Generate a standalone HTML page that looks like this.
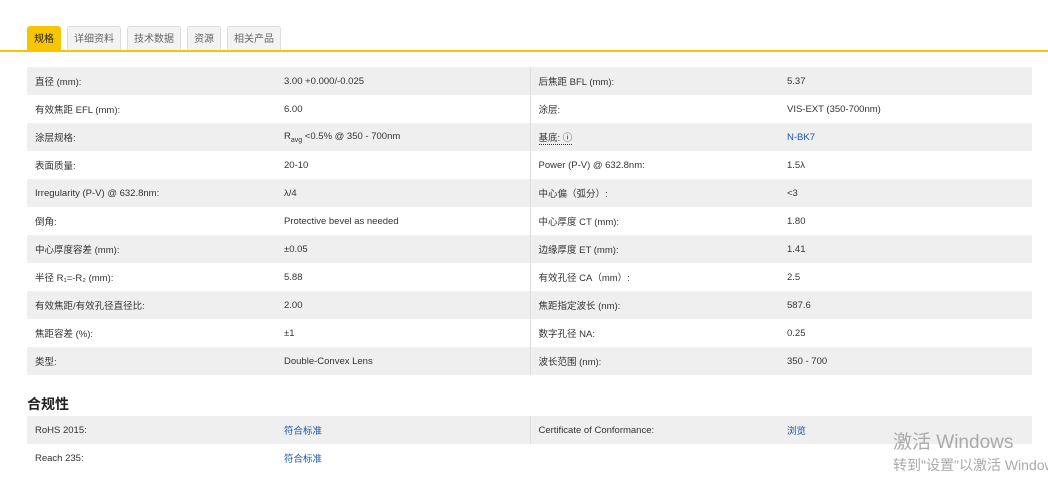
<!DOCTYPE html>
<html><head><meta charset="utf-8"><style>
body{margin:0;width:1048px;height:500px;background:#fff;font-family:"Liberation Sans","Noto Sans CJK SC",sans-serif;color:#333;overflow:hidden;position:relative}
.tabs{position:absolute;left:27px;top:26px;height:24px;display:flex;gap:6px}
.tab{height:23px;line-height:25px;padding:0 6px;font-size:10px;color:#666;background:#f3f3f3;border:1px solid #ddd;border-bottom:none;border-radius:3px 3px 0 0}
.tab.a{background:#f7c600;color:#222;border-color:#f7c600}
.line{position:absolute;left:0;top:50px;width:1048px;height:2px;background:#f7c600}
table{position:absolute;left:27px;border-collapse:collapse;width:1005px;font-size:9.5px;table-layout:fixed}
td{height:28px;padding:0 0 0 8px;vertical-align:middle;box-sizing:border-box}
tr:nth-child(odd) td{background:#efefef}
td.c1{width:249px}td.c2{width:254px;border-right:1px solid #ddd}td.c3{width:249px}
a{color:#1a56a6;text-decoration:none}
h3{position:absolute;left:27px;top:394px;margin:0;font-size:14px;font-weight:bold;color:#222}
.wm{position:absolute;left:893px;top:427px;color:#aaa;font-size:19px}
.wm2{position:absolute;left:893px;top:455px;color:#aaa;font-size:14px;white-space:nowrap}
</style></head><body>
<div class="tabs"><div class="tab a">规格</div><div class="tab">详细资料</div><div class="tab">技术数据</div><div class="tab">资源</div><div class="tab">相关产品</div></div>
<div class="line"></div>
<table style="top:67px">
<tr><td class="c1">直径 (mm):</td><td class="c2">3.00 +0.000/-0.025</td><td class="c3">后焦距 BFL (mm):</td><td>5.37</td></tr>
<tr><td class="c1">有效焦距 EFL (mm):</td><td class="c2">6.00</td><td class="c3">涂层:</td><td>VIS-EXT (350-700nm)</td></tr>
<tr><td class="c1">涂层规格:</td><td class="c2">R<sub style="font-size:7px">avg</sub> &lt;0.5% @ 350 - 700nm</td><td class="c3"><span style="border-bottom:1px dotted #333">基底: ⓘ</span></td><td><a>N-BK7</a></td></tr>
<tr><td class="c1">表面质量:</td><td class="c2">20-10</td><td class="c3">Power (P-V) @ 632.8nm:</td><td>1.5λ</td></tr>
<tr><td class="c1">Irregularity (P-V) @ 632.8nm:</td><td class="c2">λ/4</td><td class="c3">中心偏（弧分）:</td><td>&lt;3</td></tr>
<tr><td class="c1">倒角:</td><td class="c2">Protective bevel as needed</td><td class="c3">中心厚度 CT (mm):</td><td>1.80</td></tr>
<tr><td class="c1">中心厚度容差 (mm):</td><td class="c2">±0.05</td><td class="c3">边缘厚度 ET (mm):</td><td>1.41</td></tr>
<tr><td class="c1">半径 R₁=-R₂ (mm):</td><td class="c2">5.88</td><td class="c3">有效孔径 CA（mm）:</td><td>2.5</td></tr>
<tr><td class="c1">有效焦距/有效孔径直径比:</td><td class="c2">2.00</td><td class="c3">焦距指定波长 (nm):</td><td>587.6</td></tr>
<tr><td class="c1">焦距容差 (%):</td><td class="c2">±1</td><td class="c3">数字孔径 NA:</td><td>0.25</td></tr>
<tr><td class="c1">类型:</td><td class="c2">Double-Convex Lens</td><td class="c3">波长范围 (nm):</td><td>350 - 700</td></tr>
</table>
<h3>合规性</h3>
<table style="top:416px">
<tr><td class="c1">RoHS 2015:</td><td class="c2"><a>符合标准</a></td><td class="c3">Certificate of Conformance:</td><td><a>浏览</a></td></tr>
<tr><td class="c1">Reach 235:</td><td class="c2" style="border-right:none"><a>符合标准</a></td><td class="c3"></td><td></td></tr>
</table>
<div class="wm">激活 Windows</div>
<div class="wm2">转到"设置"以激活 Windows</div>
</body></html>
